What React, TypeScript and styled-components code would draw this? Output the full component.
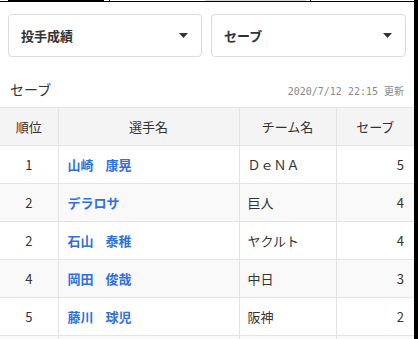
import React from "react";
import styled, { createGlobalStyle } from "styled-components";

interface RowType {
  rank: number;
  name: string;
  team: string;
  saves: number;
}

const rows: RowType[] = [
  { rank: 1, name: "山崎 康晃", team: "ＤｅＮＡ", saves: 5 },
  { rank: 2, name: "デラロサ", team: "巨人", saves: 4 },
  { rank: 2, name: "石山 泰稚", team: "ヤクルト", saves: 4 },
  { rank: 4, name: "岡田 俊哉", team: "中日", saves: 3 },
  { rank: 5, name: "藤川 球児", team: "阪神", saves: 2 },
  { rank: 6, name: "", team: "", saves: 0 }
];

const GlobalStyle = createGlobalStyle`
  html, body {
    margin: 0;
    padding: 0;
    background: #fff;
    overflow: hidden;
  }
  body {
    font-family: "Noto Sans CJK JP", "Noto Sans", sans-serif;
    color: #333;
  }
`;

function Caret() {
  return (
    <svg width="9" height="5" viewBox="0 0 9 5">
      <path d="M0 0 H9 L4.5 5 Z" fill="#333" />
    </svg>
  );
}

function App() {
  return (
    <Page>
      <GlobalStyle />
      <Main>
        <TopEdge>
          <Seg $w={8} />
          <Seg $w={96} $color="#000" />
          <Seg $w={5} />
          <Seg $w={1} $color="#000" />
          <Seg $w={95} />
          <Seg $w={101} $color="#d8d8d8" />
          <Seg $w={4} />
          <Seg $w={1} $color="#000" />
        </TopEdge>
        <Selects>
          <SelectBox>
            <span>投手成績</span>
            <Caret />
          </SelectBox>
          <SelectBox>
            <span>セーブ</span>
            <Caret />
          </SelectBox>
        </Selects>
        <HeadRow>
          <Heading>セーブ</Heading>
          <Updated>2020/7/12 22:15 更新</Updated>
        </HeadRow>
        <Table>
          <colgroup>
            <col style={{ width: 58 }} />
            <col style={{ width: 181 }} />
            <col style={{ width: 97 }} />
            <col style={{ width: 78 }} />
          </colgroup>
          <thead>
            <tr>
              <Th>順位</Th>
              <Th>選手名</Th>
              <Th>チーム名</Th>
              <Th>セーブ</Th>
            </tr>
          </thead>
          <tbody>
            {rows.map((r, i) => (
              <Tr key={i} $odd={i % 2 === 1}>
                <Td $align="center">{r.name ? r.rank : ""}</Td>
                <NameTd>
                  {r.name.split(" ").map((part, j) => (
                    <NamePart key={j}>{part}</NamePart>
                  ))}
                </NameTd>
                <Td>{r.team}</Td>
                <Td $align="right">{r.name ? r.saves : ""}</Td>
              </Tr>
            ))}
          </tbody>
        </Table>
      </Main>
    </Page>
  );
}

export default App;

const Page = styled.div`
  display: flex;
  width: 418px;
  height: 339px;
  overflow: hidden;
  border-right: 4px solid #000;
  box-sizing: border-box;
`;

const Main = styled.div`
  width: 414px;
  display: flex;
  flex-direction: column;
`;

const TopEdge = styled.div`
  display: flex;
  height: 1px;
  border-bottom: 1px solid #000;
  flex-shrink: 0;
`;

const Seg = styled.div<{ $w: number; $color?: string }>`
  width: ${(p) => p.$w}px;
  height: 1px;
  background: ${(p) => p.$color || "#fff"};
`;

const Selects = styled.div`
  display: grid;
  grid-template-columns: 194px 195px;
  gap: 9px;
  padding: 12px 8px 0 8px;
`;

const SelectBox = styled.div`
  display: flex;
  align-items: center;
  justify-content: space-between;
  height: 43px;
  box-sizing: border-box;
  border: 1px solid #dcdcdc;
  border-radius: 4px;
  padding: 0 13px 0 12px;
  font-size: 13px;
  font-weight: 700;
  color: #333;
`;

const HeadRow = styled.div`
  display: flex;
  align-items: center;
  justify-content: space-between;
  height: 20px;
  margin: 22px 0 8px;
  padding: 0 10px;
`;

const Heading = styled.div`
  font-size: 14px;
  color: #333;
`;

const Updated = styled.div`
  font-family: "DejaVu Sans Mono", "Noto Sans CJK JP", monospace;
  font-size: 10px;
  color: #8a8a8a;
  padding-top: 3px;
`;

const Table = styled.table`
  width: 414px;
  table-layout: fixed;
  border-collapse: collapse;
  border-top: 1px solid #e4e4e4;
  font-size: 13px;
`;

const Th = styled.th`
  height: 37px;
  padding: 0;
  background: #f4f4f4;
  font-weight: 400;
  color: #333;
  text-align: center;
  border-bottom: 1px solid #e4e4e4;
  border-left: 1px solid #e4e4e4;
  &:first-child {
    border-left: none;
  }
`;

const Tr = styled.tr<{ $odd: boolean }>`
  background: ${(p) => (p.$odd ? "#f9f9f9" : "#fff")};
`;

const Td = styled.td<{ $align?: string }>`
  height: 37px;
  padding: 0 10px 0 8px;
  text-align: ${(p) => p.$align || "left"};
  color: #333;
  border-bottom: 1px solid #e4e4e4;
  border-left: 1px solid #e4e4e4;
  white-space: nowrap;
  &:first-child {
    border-left: none;
    padding: 0;
  }
`;

const NameTd = styled(Td)`
  padding: 0 0 0 9px;
  color: #2f6fe6;
  font-weight: 700;
`;

const NamePart = styled.span`
  & + & {
    margin-left: 12px;
  }
`;
